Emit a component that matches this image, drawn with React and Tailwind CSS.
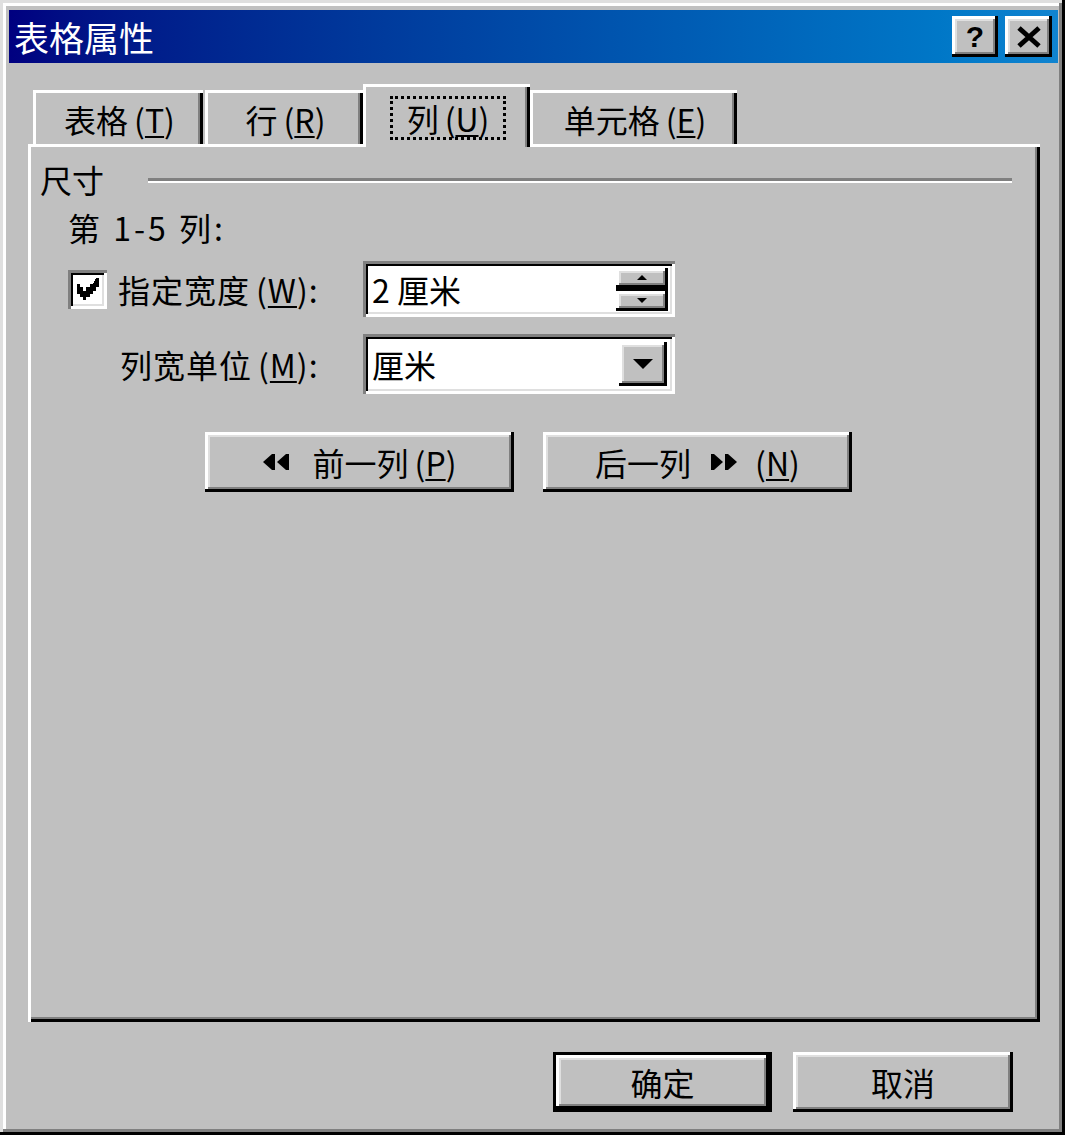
import React from 'react';

const raised =
  'bg-[#c0c0c0] shadow-[inset_-3px_-3px_0_#000,inset_3px_3px_0_#fff,inset_-5px_-5px_0_#808080,inset_5px_5px_0_#dfdfdf]';
const sunken =
  'bg-white shadow-[inset_3px_3px_0_#808080,inset_-3px_-3px_0_#fff,inset_5px_5px_0_#000,inset_-5px_-5px_0_#dfdfdf]';

const Acc = ({ k }) => (
  <span className="ml-[6px]">
    (<span className="underline underline-offset-[3px] decoration-[2px]">{k}</span>)
  </span>
);

const Tab = ({ label, k, selected, className = '' }) =>
  selected ? (
    <div
      className={`relative z-10 -mb-[3px] h-[63px] bg-[#c0c0c0] border-t-[3px] border-l-[3px] border-white flex items-start justify-center pt-[9px] shadow-[inset_-3px_0_0_#000,inset_-5px_0_0_#808080] ${className}`}
    >
      <div className="h-[44px] px-[14px] border-[3px] border-dotted border-black flex items-center leading-[36px]">
        {label}
        <Acc k={k} />
      </div>
    </div>
  ) : (
    <div
      className={`h-[54px] border-t-[3px] border-l-[3px] border-white flex items-center justify-center leading-[36px] shadow-[inset_-3px_0_0_#000,inset_-5px_0_0_#808080] ${className}`}
    >
      {label}
      <Acc k={k} />
    </div>
  );

const LeftArrows = () => (
  <svg width="28" height="18" viewBox="0 0 28 18" className="mr-[22px]">
    <polygon points="0,9 9,1 9,17" fill="#000" />
    <rect x="9" y="1" width="3" height="16" fill="#000" />
    <polygon points="14,9 23,1 23,17" fill="#000" />
    <rect x="23" y="1" width="3" height="16" fill="#000" />
  </svg>
);

const RightArrows = () => (
  <svg width="28" height="18" viewBox="0 0 28 18" className="mx-[18px]">
    <rect x="2" y="1" width="3" height="16" fill="#000" />
    <polygon points="5,1 14,9 5,17" fill="#000" />
    <rect x="16" y="1" width="3" height="16" fill="#000" />
    <polygon points="19,1 28,9 19,17" fill="#000" />
  </svg>
);

export default function App() {
  return (
    <div className="w-[1065px] h-[1135px] bg-[#c0c0c0] text-black text-[32px] font-['Noto_Sans_CJK_SC','Liberation_Sans',sans-serif] shadow-[inset_-3px_-3px_0_#000,inset_3px_3px_0_#dfdfdf,inset_-6px_-6px_0_#808080,inset_6px_6px_0_#fff] pt-[10px] pl-[9px] pr-[7px] flex flex-col">
      {/* title bar */}
      <div className="h-[53px] bg-gradient-to-r from-[#000080] to-[#1084d0] flex items-center pl-[5px] pr-[6px]">
        <div className="text-white text-[35px] leading-[38px] flex-1">表格属性</div>
        <div className="flex gap-[7px]">
          <div className={`${raised} w-[46px] h-[41px] flex items-center justify-center text-[30px] font-bold leading-none font-['Liberation_Sans',sans-serif]`}>
            ?
          </div>
          <div className={`${raised} w-[47px] h-[41px] flex items-center justify-center`}>
            <svg width="26" height="22" viewBox="0 0 26 22">
              <path d="M3 2 L23 20 M23 2 L3 20" stroke="#000" strokeWidth="5" />
            </svg>
          </div>
        </div>
      </div>

      <div className="pl-[19px] pr-[18px] flex flex-col">
        {/* tabs */}
        <div className="mt-[21px] h-[60px] flex items-end pl-[5px]">
          <Tab label="表格" k="T" className="w-[170px]" />
          <Tab label="行" k="R" className="ml-[2px] w-[158px]" />
          <Tab label="列" k="U" selected className="w-[167px]" />
          <Tab label="单元格" k="E" className="w-[207px]" />
        </div>

        {/* panel */}
        <div className="h-[878px] border-t-[3px] border-l-[3px] border-white shadow-[inset_-3px_-3px_0_#000,inset_-5px_-5px_0_#808080] pt-[14px] pl-[9px] pr-[28px] flex flex-col">
          <div className="flex items-center leading-[36px]">
            <span>尺寸</span>
            <div className="ml-[44px] flex-1 h-[5px] border-t-[3px] border-[#808080] border-b-[2px] border-b-white mt-[2px]" />
          </div>

          <div className="ml-[28px] mt-[12px] leading-[36px] tracking-[3px]">
            第 1-5 列:
          </div>

          <div className="mt-[16px] flex items-center h-[56px] pl-[28px]">
            <div className={`${sunken} w-[39px] h-[39px] flex items-center justify-center`}>
              <svg width="24" height="22" viewBox="0 0 7 7" shapeRendering="crispEdges">
                <path
                  d="M6 0h1v3h-1v1h-1v1h-1v1h-1v1h-1v-1h-1v-1h-1v-3h1v1h1v1h1v-1h1v-1h1z"
                  fill="#000"
                />
              </svg>
            </div>
            <div className="ml-[11px] w-[245px] leading-[36px] tracking-[1px]">
              指定宽度<Acc k="W" />:
            </div>
            <div className={`${sunken} w-[312px] h-[56px] flex items-center pl-[9px] pr-[7px]`}>
              <span className="flex-1 leading-[36px]">2 厘米</span>
              <div className="flex flex-col w-[52px] gap-[3px] bg-black">
                <div className={`${raised} h-[20px] flex items-center justify-center`}>
                  <svg width="10" height="5" viewBox="0 0 10 5">
                    <polygon points="5,0 10,5 0,5" fill="#000" />
                  </svg>
                </div>
                <div className={`${raised} h-[20px] flex items-center justify-center`}>
                  <svg width="10" height="5" viewBox="0 0 10 5">
                    <polygon points="0,0 10,0 5,5" fill="#000" />
                  </svg>
                </div>
              </div>
            </div>
          </div>

          <div className="mt-[17px] flex items-center h-[60px] pl-[78px]">
            <div className="w-[245px] leading-[36px] pl-[2px] tracking-[1px]">
              列宽单位<Acc k="M" />:
            </div>
            <div className={`${sunken} w-[312px] h-[60px] flex items-center pl-[9px] pr-[8px]`}>
              <span className="flex-1 leading-[36px]">厘米</span>
              <div className={`${raised} w-[48px] h-[44px] flex items-center justify-center`}>
                <svg width="20" height="10" viewBox="0 0 20 10">
                  <polygon points="0,0 20,0 10,10" fill="#000" />
                </svg>
              </div>
            </div>
          </div>

          <div className="mt-[38px] flex gap-[29px] pl-[165px]">
            <div className={`${raised} w-[309px] h-[60px] flex items-center justify-center leading-[36px]`}>
              <LeftArrows />
              前一列<Acc k="P" />
            </div>
            <div className={`${raised} w-[309px] h-[60px] flex items-center justify-center leading-[36px]`}>
              后一列
              <RightArrows />
              <span>
                (<span className="underline underline-offset-[3px] decoration-[2px]">N</span>)
              </span>
            </div>
          </div>
        </div>

        {/* footer buttons */}
        <div className="mt-[30px] flex justify-end gap-[21px] pr-[27px]">
          <div className="w-[219px] h-[60px] border-[3px] border-black">
            <div className={`${raised} w-full h-full flex items-center justify-center leading-[36px]`}>确定</div>
          </div>
          <div className={`${raised} w-[220px] h-[60px] flex items-center justify-center leading-[36px]`}>取消</div>
        </div>
      </div>
    </div>
  );
}
